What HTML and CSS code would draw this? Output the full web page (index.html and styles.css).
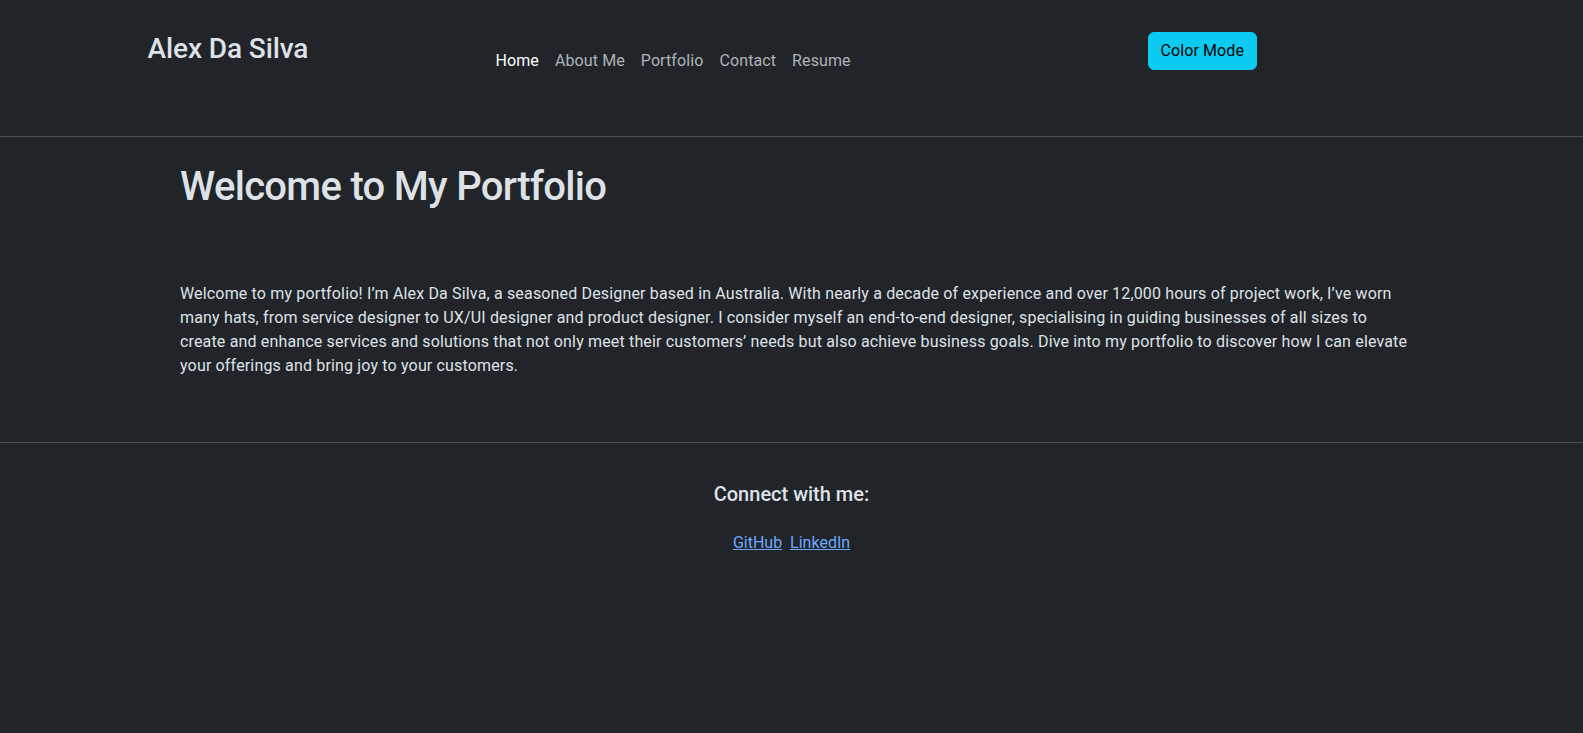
FILE: index.html
```html
<!DOCTYPE html>
<html lang="en">
<head>
<meta charset="utf-8">
<title>Alex Da Silva</title>
<link rel="stylesheet" href="styles.css">
</head>
<body>
<header class="site-header">
  <div class="header-inner">
    <div class="brand">Alex Da Silva</div>
    <nav class="main-nav">
      <a class="nav-link active" href="#">Home</a>
      <a class="nav-link" href="#">About Me</a>
      <a class="nav-link" href="#">Portfolio</a>
      <a class="nav-link" href="#">Contact</a>
      <a class="nav-link" href="#">Resume</a>
    </nav>
    <button class="btn-mode" type="button">Color Mode</button>
  </div>
</header>
<main class="content">
  <h1 class="page-title">Welcome to My Portfolio</h1>
  <p class="intro">Welcome to my portfolio! I’m Alex Da Silva, a seasoned Designer based in Australia. With nearly a decade of experience and over 12,000 hours of project work, I’ve worn many hats, from service designer to UX/UI designer and product designer. I consider myself an end-to-end designer, specialising in guiding businesses of all sizes to create and enhance services and solutions that not only meet their customers’ needs but also achieve business goals. Dive into my portfolio to discover how I can elevate your offerings and bring joy to your customers.</p>
</main>
<footer class="site-footer">
  <h5 class="connect-title">Connect with me:</h5>
  <div class="social-links">
    <a href="#">GitHub</a>
    <a href="#">LinkedIn</a>
  </div>
</footer>
</body>
</html>
```
FILE: styles.css
```css
* { box-sizing: border-box; }
html, body { margin: 0; padding: 0; }
body {
  background: #212529;
  color: #dee2e6;
  font-family: Roboto, "Noto Sans", sans-serif;
  font-size: 16px;
  line-height: 1.5;
  min-height: 733px;
}
.site-header {
  border-bottom: 1px solid #495057;
  height: 137px;
}
.header-inner {
  width: 1320px;
  margin: 0 auto;
  padding: 32px 0 0 16px;
  display: flex;
  align-items: flex-start;
}
.brand {
  font-size: 28px;
  font-weight: 500;
  line-height: 1.2;
  width: 340px;
  letter-spacing: -0.1px;
}
.main-nav {
  display: flex;
  padding-top: 9px;
  width: 660px;
}
.nav-link {
  color: rgba(222, 226, 230, 0.75);
  text-decoration: none;
  padding: 8px 8px;
  line-height: 1.5;
  letter-spacing: 0.1px;
}
.nav-link.active { color: #fff; }
.btn-mode {
  font-family: inherit;
  font-size: 16px;
  line-height: 1.5;
  padding: 6px 12px;
  background: #0dcaf0;
  color: #000;
  border: 1px solid #0dcaf0;
  border-radius: 6px;
  margin-top: 0;
  letter-spacing: 0.1px;
}
.content {
  width: 1232px;
  margin: 0 auto 0 180px;
  padding: 26px 0 64px;
}
.page-title {
  font-size: 40px;
  font-weight: 500;
  line-height: 1.2;
  margin: 0 0 71px;
  letter-spacing: -0.7px;
}
.intro {
  margin: 0;
  letter-spacing: 0.16px;
}
.site-footer {
  border-top: 1px solid #495057;
  text-align: center;
  padding-top: 39px;
}
.connect-title {
  font-size: 20px;
  font-weight: 500;
  line-height: 1.2;
  margin: 0 0 25px;
}
.social-links a {
  color: #6ea8fe;
  margin: 0 2px;
}
```
